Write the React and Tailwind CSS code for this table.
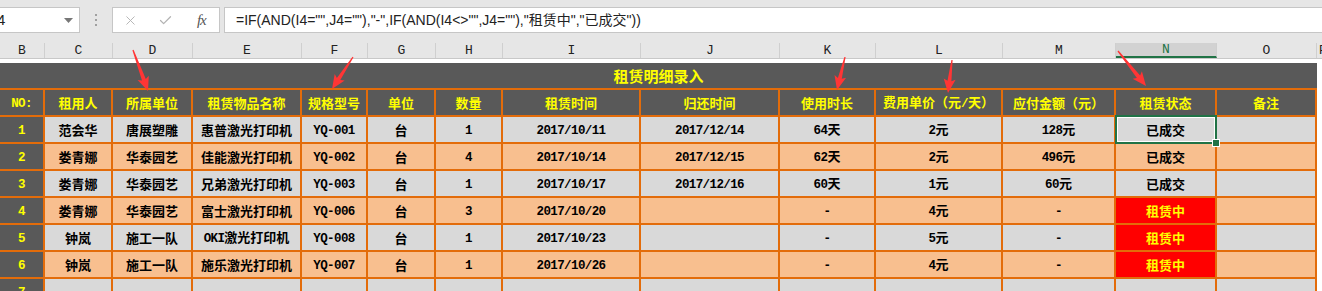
import React from "react";
import { X, Check } from "lucide-react";

const W = [
  "w-[45px]", "w-[68px]", "w-[80px]", "w-[109px]", "w-[66px]", "w-[68px]", "w-[67px]",
  "w-[138px]", "w-[139px]", "w-[96px]", "w-[127px]", "w-[113px]", "w-[101px]", "w-[100px]",
];
const LETTERS = ["B", "C", "D", "E", "F", "G", "H", "I", "J", "K", "L", "M", "N", "O"];

const HEAD = ["NO:", "租用人", "所属单位", "租赁物品名称", "规格型号", "单位", "数量", "租赁时间", "归还时间", "使用时长", "费用单价（元/天）", "应付金额（元）", "租赁状态", "备注"];

const ROWS = [
  ["1", "范会华", "唐展塑雕", "惠普激光打印机", "YQ-001", "台", "1", "2017/10/11", "2017/12/14", "64天", "2元", "128元", "已成交", ""],
  ["2", "娄青娜", "华泰园艺", "佳能激光打印机", "YQ-002", "台", "4", "2017/10/14", "2017/12/15", "62天", "2元", "496元", "已成交", ""],
  ["3", "娄青娜", "华泰园艺", "兄弟激光打印机", "YQ-003", "台", "1", "2017/10/17", "2017/12/16", "60天", "1元", "60元", "已成交", ""],
  ["4", "娄青娜", "华泰园艺", "富士激光打印机", "YQ-006", "台", "3", "2017/10/20", "", "-", "4元", "-", "租赁中", ""],
  ["5", "钟岚", "施工一队", "OKI激光打印机", "YQ-008", "台", "1", "2017/10/23", "", "-", "5元", "-", "租赁中", ""],
  ["6", "钟岚", "施工一队", "施乐激光打印机", "YQ-007", "台", "1", "2017/10/26", "", "-", "4元", "-", "租赁中", ""],
  ["7", "", "", "", "", "", "", "", "", "", "", "", "", ""],
];

function Mixed({ s }) {
  const parts = s.split(/([\x20-\x7e]+)/).filter(Boolean);
  return (
    <span className="whitespace-nowrap">
      {parts.map((p, i) =>
        /^[\x20-\x7e]+$/.test(p) ? (
          <span key={i} className="font-['Liberation_Mono',monospace] text-[12.5px] tracking-[-0.6px]">
            {p}
          </span>
        ) : (
          <span key={i}>{p}</span>
        )
      )}
    </span>
  );
}

const CELL =
  "shrink-0 h-[27px] flex items-center justify-center border-r-2 border-b-2 border-[#e36c0a] font-bold text-[13px] leading-none font-['Noto_Sans_CJK_SC',sans-serif]";

function arrowPoints(x1, y1, x2, y2) {
  const dx = x2 - x1, dy = y2 - y1;
  const L = Math.hypot(dx, dy);
  const ux = dx / L, uy = dy / L;
  const px = -uy, py = ux;
  const headLen = 14, headW = 6, shaftW = 2, tailW = 0.6;
  const bx = x2 - ux * headLen, by = y2 - uy * headLen;
  const nx = x2 - ux * (headLen - 2), ny = y2 - uy * (headLen - 2);
  const pts = [
    [x1 + px * tailW, y1 + py * tailW],
    [nx + px * shaftW, ny + py * shaftW],
    [bx + px * headW, by + py * headW],
    [x2, y2],
    [bx - px * headW, by - py * headW],
    [nx - px * shaftW, ny - py * shaftW],
    [x1 - px * tailW, y1 - py * tailW],
  ];
  return pts.map((p) => p[0].toFixed(1) + "," + p[1].toFixed(1)).join(" ");
}

const ARROWS = [
  [133, 50, 148, 91],
  [353, 57, 332, 89],
  [845, 57, 837, 90],
  [952, 60, 948, 93],
  [1118, 51, 1146, 86],
];

export default function App() {
  return (
    <div className="relative w-[1322px] h-[291px] overflow-hidden bg-white">
      {/* formula bar */}
      <div className="h-[43px] bg-[#e6e6e6] flex items-start pt-[7px]">
        <div className="w-[80px] h-[26px] bg-white border border-l-0 border-[#c6c6c6] flex items-center justify-between overflow-hidden">
          <span className="-ml-[3px] text-[15px] text-[#222] font-['Liberation_Sans',sans-serif]">4</span>
          <svg width="9" height="5" viewBox="0 0 9 5" className="mr-[6px]">
            <polygon points="0,0 9,0 4.5,5" fill="#777" />
          </svg>
        </div>
        <div className="w-[32px] h-[26px] flex flex-col items-center justify-center gap-[3px]">
          <div className="w-[2px] h-[2px] bg-[#a0a0a0]" />
          <div className="w-[2px] h-[2px] bg-[#a0a0a0]" />
          <div className="w-[2px] h-[2px] bg-[#a0a0a0]" />
        </div>
        <div className="w-[108px] h-[26px] bg-white border border-[#c6c6c6] flex items-center">
          <div className="w-[36px] flex justify-center">
            <X size={15} strokeWidth={1.5} color="#b3b3b3" />
          </div>
          <div className="w-[36px] flex justify-center">
            <Check size={15} strokeWidth={2} color="#b3b3b3" />
          </div>
          <div className="w-[36px] flex justify-center">
            <span className="italic text-[15px] text-[#555] font-['Liberation_Serif',serif] tracking-[-1px]">fx</span>
          </div>
        </div>
        <div className="ml-[4px] flex-1 h-[26px] bg-white border border-r-0 border-[#c6c6c6] flex items-center pl-[11px] text-[14px] text-[#222] font-['Liberation_Sans','Noto_Sans_CJK_SC',sans-serif] whitespace-nowrap">
          =IF(AND(I4="",J4=""),"-",IF(AND(I4&lt;&gt;"",J4=""),"租赁中","已成交"))
        </div>
      </div>

      {/* column headers */}
      <div className="flex h-[16px] bg-[#e6e6e6] border-b border-[#c8c8c8]">
        {LETTERS.map((l, i) => (
          <div
            key={l}
            className={
              W[i] +
              " shrink-0 flex items-center justify-center border-r border-[#cfcfcf] text-[13px] leading-none font-['Liberation_Mono',monospace] " +
              (l === "N" ? "bg-[#d2d2d2] text-[#217346] border-b-2 border-b-[#217346]" : "text-[#222]")
            }
          >
            {l}
          </div>
        ))}
        <div className="flex-1 flex items-center pl-[2px] text-[13px] leading-none font-['Liberation_Mono',monospace] text-[#222]">P</div>
      </div>
      <div className="h-[4px] bg-white" />

      {/* table */}
      <div className="w-[1317px]">
        <div className="h-[27px] bg-[#595959] border-b-2 border-[#e36c0a] flex items-center justify-center text-[#ffff00] font-bold text-[15px] leading-none font-['Noto_Sans_CJK_SC',sans-serif]">
          租赁明细录入
        </div>
        <div className="flex">
          {HEAD.map((h, j) => (
            <div key={j} className={CELL + " " + W[j] + " bg-[#595959] text-[#ffff00]"}>
              <Mixed s={h} />
            </div>
          ))}
        </div>
        {ROWS.map((r, i) => {
          const rowBg = i % 2 === 0 ? "bg-[#d9d9d9]" : "bg-[#f8bf8f]";
          return (
            <div key={i} className="flex">
              {r.map((v, j) => {
                let cls = rowBg + " text-black";
                if (j === 0) cls = "bg-[#595959] text-[#ffff00]";
                if (j === 12 && v === "租赁中") cls = "bg-[#ff0000] text-[#ffff00]";
                const selected = i === 0 && j === 12;
                return (
                  <div key={j} className={CELL + " " + W[j] + " " + cls + (selected ? " relative" : "")}>
                    <Mixed s={v} />
                    {selected && (
                      <>
                        <div className="absolute -top-[2px] -left-[1px] -right-[2px] -bottom-[2px] border-2 border-[#217346]">
                          <div className="w-full h-full border border-white" />
                        </div>
                        <div className="absolute -right-[5px] -bottom-[5px] w-[8px] h-[8px] bg-[#217346] border border-white z-10" />
                      </>
                    )}
                  </div>
                );
              })}
            </div>
          );
        })}
      </div>

      {/* annotation arrows */}
      <svg className="absolute inset-0 pointer-events-none" width="1322" height="291">
        {ARROWS.map((a, i) => (
          <polygon key={i} points={arrowPoints(a[0], a[1], a[2], a[3])} fill="#ff3535" />
        ))}
      </svg>
    </div>
  );
}
